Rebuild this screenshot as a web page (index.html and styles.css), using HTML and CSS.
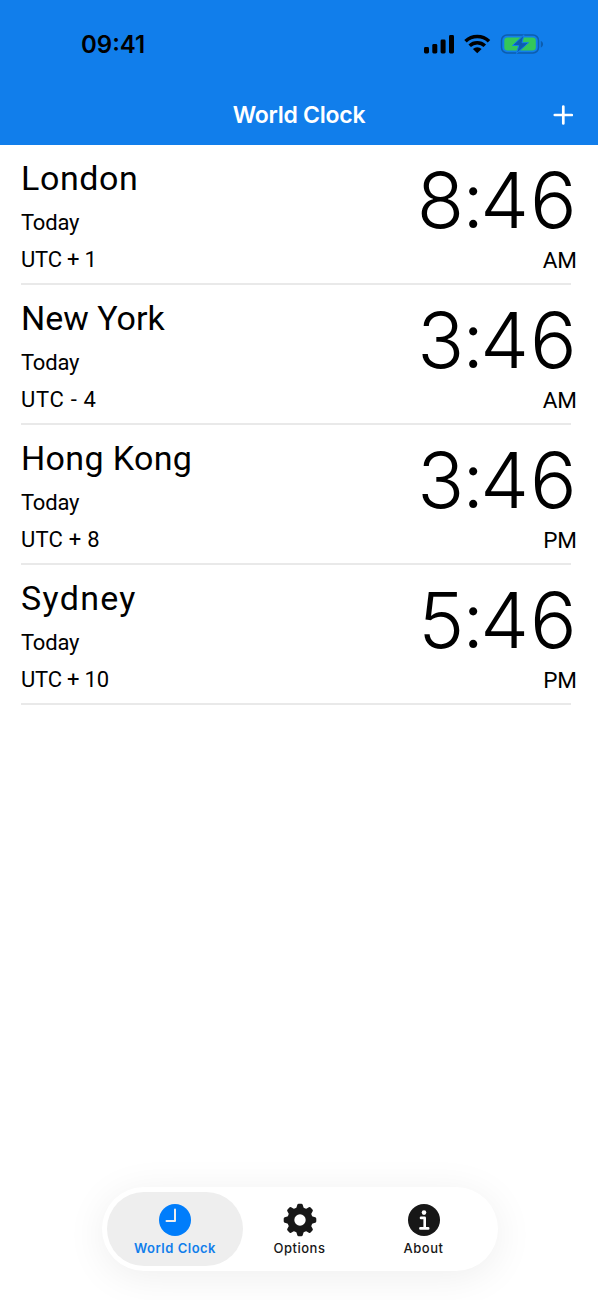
FILE: index.html
```html
<!DOCTYPE html>
<html lang="en">
<head>
<meta charset="utf-8">
<title>World Clock</title>
<link rel="stylesheet" href="styles.css">
</head>
<body>
<div class="app">
  <header class="header">
    <div class="status">
      <span class="status-time">09:41</span>
      <svg class="status-icons" width="122" height="24" viewBox="0 0 122 24">
        <g fill="#000">
          <rect x="1" y="15" width="5" height="6.500" rx="1.4"/>
          <rect x="9.3" y="12" width="5" height="9.500" rx="1.4"/>
          <rect x="17.6" y="7.500" width="5" height="14" rx="1.4"/>
          <rect x="26" y="3" width="5" height="18.500" rx="1.4"/>
        </g>
        <g fill="none" stroke="#000" stroke-width="3.6">
          <path d="M42.500 9.200a17 17 0 0 1 23.500 0"/>
          <path d="M46.700 13.700a11 11 0 0 1 15.100 0"/>
        </g>
        <path d="M49.900 17.100a6.300 6.300 0 0 1 8.700 0l-4.350 4.200z"/>
        <rect x="78.500" y="3" width="37" height="18" rx="5.500" fill="none" stroke="#0d5dae" stroke-width="1.500"/>
        <rect x="81.300" y="5.500" width="31.500" height="13" rx="3.200" fill="#34c759"/>
        <path d="M117.800 9c3 1 3 5.400 0 6.400z" fill="#0d5dae"/>
        <path d="M101 2.800 89.500 13.500h6.200L93.500 21.500 105.500 10.700h-6.500z" fill="#0d5dae" stroke="#117eeb" stroke-width="1"/>
      </svg>
    </div>
    <div class="navbar">
      <h1 class="title">World Clock</h1>
      <svg class="add" width="20" height="20" viewBox="0 0 20 20"><path d="M10.300 1.500v17M1.800 10h17" stroke="#fff" stroke-width="2.700" stroke-linecap="round"/></svg>
    </div>
  </header>
  <main class="list">
    <section class="row">
      <div class="place"><h2 class="city london">London</h2><p class="day">Today</p><p class="offset">UTC + 1</p></div>
      <div class="clock"><span class="time"><span class="hour">8</span><span class="colon">:</span><span class="four">4</span>6</span><span class="period">AM</span></div>
    </section>
    <section class="row">
      <div class="place"><h2 class="city">New York</h2><p class="day">Today</p><p class="offset minus">UTC - 4</p></div>
      <div class="clock"><span class="time"><span class="hour">3</span><span class="colon">:</span><span class="four">4</span>6</span><span class="period">AM</span></div>
    </section>
    <section class="row">
      <div class="place"><h2 class="city hongkong">Hong Kong</h2><p class="day">Today</p><p class="offset plus8">UTC + 8</p></div>
      <div class="clock"><span class="time"><span class="hour">3</span><span class="colon">:</span><span class="four">4</span>6</span><span class="period">PM</span></div>
    </section>
    <section class="row">
      <div class="place"><h2 class="city sydney">Sydney</h2><p class="day">Today</p><p class="offset">UTC + 10</p></div>
      <div class="clock"><span class="time"><span class="hour">5</span><span class="colon">:</span><span class="four">4</span>6</span><span class="period">PM</span></div>
    </section>
  </main>
  <nav class="tabs">
    <div class="tab active">
      <svg width="34" height="34" viewBox="0 0 34 34"><circle cx="17" cy="17" r="16" fill="#007dfb"/><path d="M17 6.500V18H8.500" fill="none" stroke="#eee" stroke-width="2" stroke-linecap="round" stroke-linejoin="round"/></svg>
      <span>World Clock</span>
    </div>
    <div class="tab">
      <svg width="34" height="34" viewBox="0 0 34 34"><g fill="#171717"><circle cx="17" cy="17" r="12.700"/><g id="teeth"><path id="tooth" d="M13 6 14.300 1.800Q14.600.7 15.700.7h2.600Q19.400.7 19.700 1.800L21 6zM13 28 14.300 32.200Q14.600 33.300 15.700 33.300h2.600Q19.400 33.300 19.700 32.200L21 28z"/><use href="#tooth" transform="rotate(90 17 17)"/></g><use href="#teeth" transform="rotate(45 17 17)"/></g><circle cx="17" cy="17" r="5.700" fill="#fff"/></svg>
      <span>Options</span>
    </div>
    <div class="tab about">
      <svg width="34" height="34" viewBox="0 0 34 34"><circle cx="17" cy="17" r="16" fill="#171717"/><circle cx="17" cy="9.600" r="2.300" fill="#fff"/><path d="M14 14.900h3.700v10.400M13.400 25.400h7.800" fill="none" stroke="#fff" stroke-width="2.600" stroke-linecap="round" stroke-linejoin="round"/></svg>
      <span>About</span>
    </div>
  </nav>
</div>
</body>
</html>
```
FILE: styles.css
```css
* { box-sizing: border-box; margin: 0; }
body { background: #fff; color: #000; font-family: Roboto, "Liberation Sans", sans-serif; }
.app { height: 1300px; display: flex; flex-direction: column; align-items: center; overflow: hidden; }
.header { width: 100%; height: 145px; background: #117eeb; font-family: Inter, sans-serif; }
.status { height: 88px; padding: 0 53px 0 81px; display: flex; justify-content: space-between; align-items: center; }
.status-time { font-size: 24px; font-weight: 600; letter-spacing: 0; line-height: 24px; padding-top: 2px; }
.navbar { height: 54px; padding: 0 25px 0 45px; display: grid; grid-template-columns: 1fr 20px; align-items: center; }
.title { color: #fff; font-size: 23px; font-weight: 600; letter-spacing: -0.25px; text-align: center; }
.list { width: 100%; padding-left: 21px; }
.row { height: 140px; width: 555.5px; display: flex; justify-content: space-between; background: linear-gradient(#e9e9e9, #e9e9e9) 0 138px / 550px 2px no-repeat; }
.place { padding-top: 13px; white-space: nowrap; }
.city { font-size: 34px; font-weight: 400; line-height: 40px; }
.london { letter-spacing: .6px; }
.hongkong { letter-spacing: .35px; }
.sydney { letter-spacing: 1.3px; }
.day { margin-top: 12px; font-size: 22px; line-height: 26px; letter-spacing: -.2px; }
.offset { margin-top: 11px; font-size: 22px; line-height: 26px; letter-spacing: -.2px; }
.minus { letter-spacing: .7px; }
.plus8 { letter-spacing: .25px; }
.clock { display: flex; flex-direction: column; align-items: flex-end; padding-top: 10px; }
.time { font-family: Inter, sans-serif; font-feature-settings: "calt" 0; font-size: 77.5px; font-weight: 280; line-height: 90px; height: 88px; }
.hour { letter-spacing: -2px; }
.colon { letter-spacing: -4px; }
.four { letter-spacing: 1px; }
.period { font-size: 22.5px; line-height: 26px; margin-top: 4px; letter-spacing: -.3px; }
.tabs { margin-top: auto; margin-bottom: 29px; width: 396px; height: 84px; padding: 5px; border-radius: 42px; background: #fff; box-shadow: 0 6px 40px rgba(0,0,0,.07); display: flex; margin-left: 2px; font-family: Inter, sans-serif; }
.tab { width: 113px; display: flex; flex-direction: column; align-items: center; padding-top: 10.5px; color: #171717; font-size: 13px; font-weight: 500; letter-spacing: .5px; line-height: 16px; gap: 3.5px; border-radius: 37px; }
.active { width: 136px; background: #eee; color: #117eeb; font-weight: 600; }
.about { width: 135px; }
```
